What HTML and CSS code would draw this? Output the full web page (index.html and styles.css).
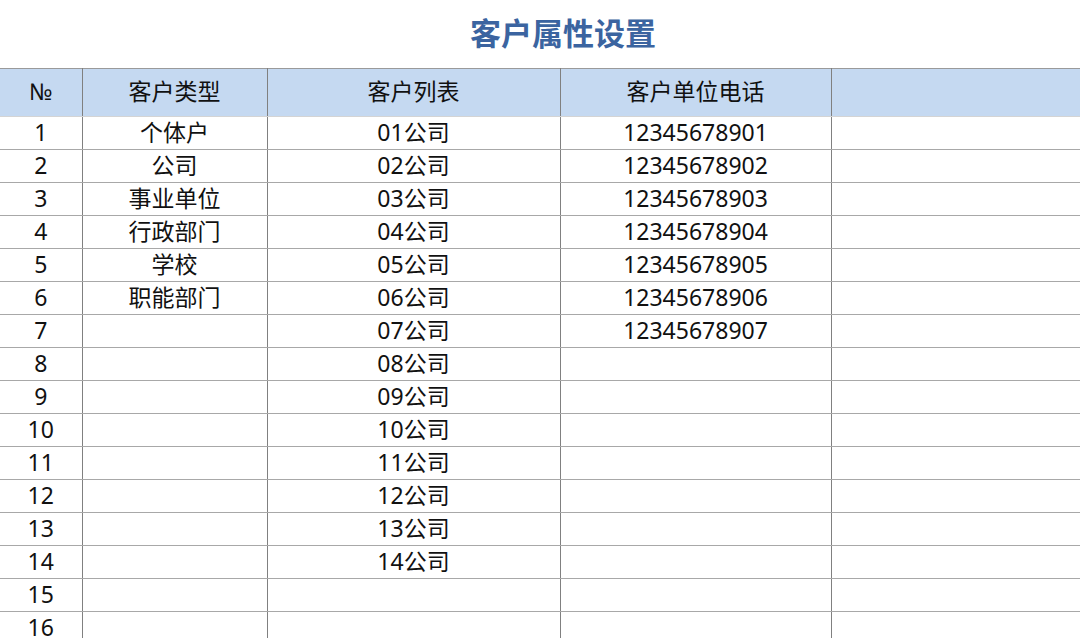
FILE: index.html
```html
<!DOCTYPE html>
<html>
<head>
<meta charset="utf-8">
<link rel="stylesheet" href="styles.css">
</head>
<body>
<div class="title">客户属性设置</div>
<table class="grid">
<colgroup>
<col class="c1"><col class="c2"><col class="c3"><col class="c4"><col class="c5">
</colgroup>
<thead>
<tr><th>№</th><th>客户类型</th><th>客户列表</th><th>客户单位电话</th><th></th></tr>
</thead>
<tbody>
<tr><td>1</td><td>个体户</td><td>01公司</td><td>12345678901</td><td></td></tr>
<tr><td>2</td><td>公司</td><td>02公司</td><td>12345678902</td><td></td></tr>
<tr><td>3</td><td>事业单位</td><td>03公司</td><td>12345678903</td><td></td></tr>
<tr><td>4</td><td>行政部门</td><td>04公司</td><td>12345678904</td><td></td></tr>
<tr><td>5</td><td>学校</td><td>05公司</td><td>12345678905</td><td></td></tr>
<tr><td>6</td><td>职能部门</td><td>06公司</td><td>12345678906</td><td></td></tr>
<tr><td>7</td><td></td><td>07公司</td><td>12345678907</td><td></td></tr>
<tr><td>8</td><td></td><td>08公司</td><td></td><td></td></tr>
<tr><td>9</td><td></td><td>09公司</td><td></td><td></td></tr>
<tr><td>10</td><td></td><td>10公司</td><td></td><td></td></tr>
<tr><td>11</td><td></td><td>11公司</td><td></td><td></td></tr>
<tr><td>12</td><td></td><td>12公司</td><td></td><td></td></tr>
<tr><td>13</td><td></td><td>13公司</td><td></td><td></td></tr>
<tr><td>14</td><td></td><td>14公司</td><td></td><td></td></tr>
<tr><td>15</td><td></td><td></td><td></td><td></td></tr>
<tr><td>16</td><td></td><td></td><td></td><td></td></tr>
</tbody>
</table>
</body>
</html>
```
FILE: styles.css
```css
html, body {
  margin: 0;
  padding: 0;
  background: #ffffff;
  overflow: hidden;
}
body {
  width: 1080px;
  height: 638px;
  font-family: "Noto Sans", "Noto Sans CJK SC", sans-serif;
  color: #111111;
}
.title {
  height: 68px;
  box-sizing: border-box;
  padding-left: 46px;
  padding-bottom: 6px;
  display: flex;
  align-items: center;
  justify-content: center;
  font-size: 31px;
  font-weight: bold;
  color: #3b64a0;
}
.grid {
  width: 1080px;
  table-layout: fixed;
  border-collapse: collapse;
  font-size: 23px;
}
.c1 { width: 82px; }
.c2 { width: 185px; }
.c3 { width: 293px; }
.c4 { width: 271px; }
.c5 { width: 249px; }
.grid th {
  box-sizing: border-box;
  height: 48px;
  background: #c5d9f1;
  font-weight: normal;
  border-top: 1px solid #9a9a9a;
  border-bottom: 1px solid #d4d4d4;
  border-left: 1px solid #808080;
  border-right: 1px solid #808080;
  padding: 0 0 3px 0;
  text-align: center;
  line-height: 24px;
  overflow: hidden;
}
.grid td {
  box-sizing: border-box;
  height: 33px;
  border-bottom: 1px solid #a8a8a8;
  border-left: 1px solid #808080;
  border-right: 1px solid #808080;
  padding: 0 0 2px 0;
  text-align: center;
  line-height: 24px;
  overflow: hidden;
}
.grid th:first-child, .grid td:first-child { border-left: none; }
.grid th:last-child, .grid td:last-child { border-right: none; }
```
